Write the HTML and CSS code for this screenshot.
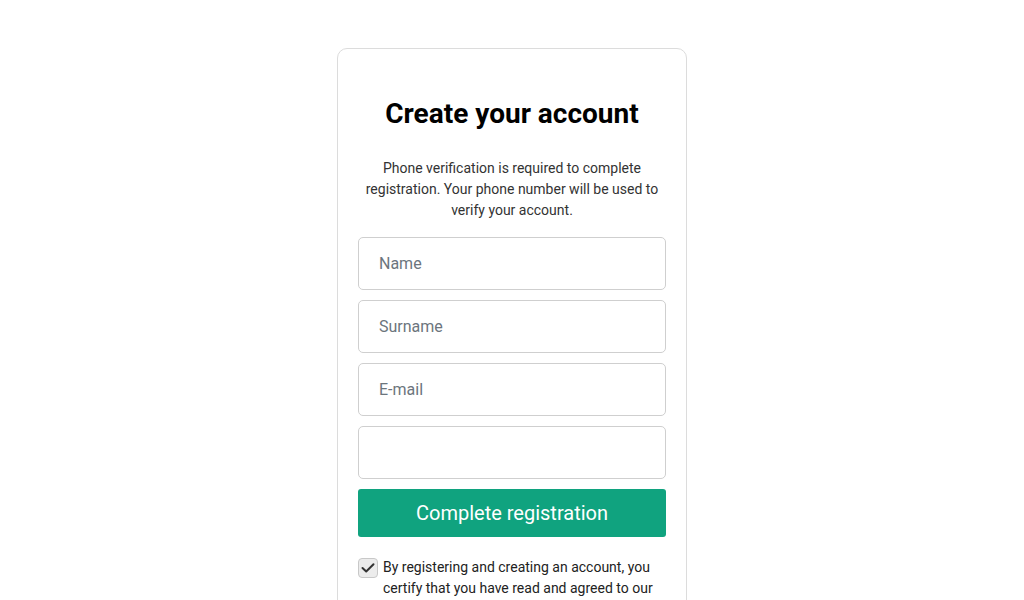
FILE: index.html
```html
<!DOCTYPE html>
<html lang="en">
<head>
<meta charset="utf-8">
<title>Create your account</title>
<link rel="stylesheet" href="styles.css">
</head>
<body>
<main class="page">
  <section class="card">
    <h1 class="title">Create your account</h1>
    <p class="lead">Phone verification is required to complete registration. Your phone number will be used to verify your account.</p>
    <form class="form">
      <input class="field" type="text" placeholder="Name">
      <input class="field" type="text" placeholder="Surname">
      <input class="field" type="email" placeholder="E-mail">
      <input class="field" type="tel">
      <button class="submit" type="button">Complete registration</button>
      <label class="agree">
        <span class="check"><svg width="16" height="16" viewBox="0 0 16 16"><path d="M2.5 8 L6.2 11.5 L13.5 4.2" fill="none" stroke="#333" stroke-width="2" stroke-linecap="round" stroke-linejoin="round"/></svg></span>
        <span class="agree-text">By registering and creating an account, you certify that you have read and agreed to our Terms of Use and Privacy Policy.</span>
      </label>
    </form>
  </section>
</main>
</body>
</html>
```
FILE: styles.css
```css
* { box-sizing: border-box; }
html, body { margin: 0; padding: 0; background: #fff; }
body { font-family: Roboto, "Liberation Sans", Arial, sans-serif; color: #222; }
.page { display: flex; justify-content: center; padding-top: 48px; }
.card {
  width: 350px;
  border: 1px solid #dcdcdc;
  border-radius: 10px;
  padding: 45px 20px 40px;
  background: #fff;
}
.title {
  margin: 0;
  text-align: center;
  font-size: 28px;
  font-weight: 700;
  line-height: 40px;
  color: #000;
}
.lead {
  margin: 24px 0 16px;
  text-align: center;
  font-size: 14px;
  line-height: 21px;
  color: #333;
}
.form { display: flex; flex-direction: column; gap: 10px; }
.field {
  height: 53px;
  width: 100%;
  border: 1px solid #cfcfcf;
  border-radius: 5px;
  padding: 0 20px;
  font-family: inherit;
  font-size: 16px;
  color: #333;
  background: #fff;
}
.field::placeholder { color: #6c757d; opacity: 1; }
.submit {
  height: 48px;
  border: 0;
  border-radius: 3px;
  background: #10a37f;
  color: #fff;
  font-family: inherit;
  font-size: 20px;
  cursor: pointer;
}
.agree { display: flex; gap: 5px; align-items: flex-start; margin-top: 10px; }
.check {
  flex: none;
  width: 20px;
  height: 20px;
  border: 1px solid #c8c8c8;
  border-radius: 4px;
  background: #ececec;
  display: flex;
  align-items: center;
  justify-content: center;
  margin-top: 1px;
}
.agree-text { font-size: 14px; line-height: 21px; color: #222; }
```
